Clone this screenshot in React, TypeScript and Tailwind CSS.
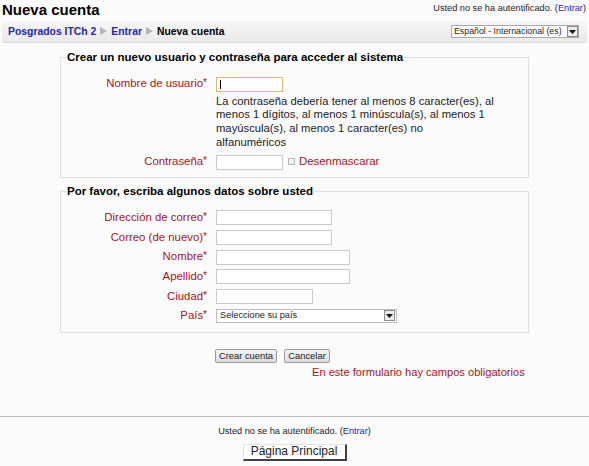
import React from "react";

const red = "text-[#a3161c]";

function Caret() {
  return <span className="block w-[1px] h-[9px] bg-black ml-[3px]" />;
}

function TextBox({ w, focused }: { w: string; focused?: boolean }) {
  return (
    <div
      className={`${w} h-[15px] bg-white border flex items-center ${
        focused ? "border-[#dcb878]" : "border-[#c9c9c9]"
      }`}
    >
      {focused && <Caret />}
    </div>
  );
}

function DropArrow() {
  return (
    <span className="w-[11px] h-[11px] border border-[#8d8d8d] bg-[#ececec] flex items-center justify-center shrink-0">
      <svg width="7" height="4" viewBox="0 0 7 4">
        <path d="M0 0H7L3.5 4Z" fill="#111" />
      </svg>
    </span>
  );
}

function Row({ label, children }: { label: string; children: React.ReactNode }) {
  return (
    <div className="grid grid-cols-[146px_1fr] gap-x-[9px] items-center h-[19.6px]">
      <div className={`text-right text-[11.4px] whitespace-nowrap ${red}`}>
        {label}
        <span className="text-[10px] align-top">*</span>
      </div>
      <div className="flex items-center">{children}</div>
    </div>
  );
}

function Arrow() {
  return (
    <svg width="7" height="8" viewBox="0 0 7 8" className="mx-[4px] inline-block">
      <path d="M0 0L7 4L0 8Z" fill="#b5b5b5" />
    </svg>
  );
}

export default function App() {
  return (
    <div className="w-[589px] h-[466px] bg-[#fbfbfb] font-['Liberation_Sans',Arial,sans-serif] text-[11.25px] text-[#222] overflow-hidden">
      <header className="flex justify-between items-start px-[2px]">
        <h1 className="text-[15px] font-bold leading-[20px] text-black">Nueva cuenta</h1>
        <div className="text-[9.2px] leading-[16px] pr-[1px] whitespace-nowrap">
          Usted no se ha autentificado. (<a className="text-[#2626a8]">Entrar</a>)
        </div>
      </header>

      <nav className="mx-[2px] mt-[1px] h-[22px] rounded-[3px] bg-gradient-to-b from-[#f6f6f6] to-[#e9e9e9] border-b border-[#dadada] flex items-center justify-between pl-[6px] pr-[8px]">
        <div className="font-bold text-[10.4px] flex items-center whitespace-nowrap">
          <a className="text-[#2626a8]">Posgrados ITCh 2</a>
          <Arrow />
          <a className="text-[#2626a8]">Entrar</a>
          <Arrow />
          <span className="text-black">Nueva cuenta</span>
        </div>
        <div className="h-[13px] w-[128px] bg-white border border-[#a9a9a9] flex items-center justify-between text-[8.8px] pl-[2px] whitespace-nowrap">
          <span>Español - Internacional (es)</span>
          <DropArrow />
        </div>
      </nav>

      <main className="mt-[6px] w-[469px] mx-auto">
        <fieldset className="border border-[#dedede] pb-[5px]">
          <legend className="ml-[5px] px-[1px] font-bold text-black text-[11.5px] whitespace-nowrap">
            Crear un nuevo usuario y contraseña para acceder al sistema
          </legend>
          <div className="pt-[8px]">
            <Row label="Nombre de usuario">
              <TextBox w="w-[67px]" focused />
            </Row>
            <p className="ml-[155px] leading-[13.6px] mt-[1px] whitespace-nowrap">
              La contraseña debería tener al menos 8 caracter(es), al
              <br />
              menos 1 dígitos, al menos 1 minúscula(s), al menos 1
              <br />
              mayúscula(s), al menos 1 caracter(es) no
              <br />
              alfanuméricos
            </p>
            <div className="mt-[3px]">
              <Row label="Contraseña">
                <TextBox w="w-[67px]" />
                <span className="ml-[5px] w-[7px] h-[7px] border border-[#b5b5b5] bg-[#f2f2f2] mr-[4px] -mt-[2px]" />
                <span className={`text-[11.4px] ${red}`}>Desenmascarar</span>
              </Row>
            </div>
          </div>
        </fieldset>

        <fieldset className="border border-[#dedede] mt-[5px] pb-[6px]">
          <legend className="ml-[5px] px-[1px] font-bold text-black text-[11.5px] whitespace-nowrap">
            Por favor, escriba algunos datos sobre usted
          </legend>
          <div className="pt-[8px]">
            <Row label="Dirección de correo">
              <TextBox w="w-[116px]" />
            </Row>
            <Row label="Correo (de nuevo)">
              <TextBox w="w-[116px]" />
            </Row>
            <Row label="Nombre">
              <TextBox w="w-[134px]" />
            </Row>
            <Row label="Apellido">
              <TextBox w="w-[134px]" />
            </Row>
            <Row label="Ciudad">
              <TextBox w="w-[97px]" />
            </Row>
            <Row label="País">
              <div className="w-[181px] h-[14px] bg-white border border-[#bdbdbd] flex items-center justify-between text-[9.2px] pl-[3px] pr-[1px]">
                <span>Seleccione su país</span>
                <DropArrow />
              </div>
            </Row>
          </div>
        </fieldset>

        <div className="mt-[16px] pl-[155px] flex gap-[7px] text-[9.4px]">
          <button className="w-[62px] h-[14px] leading-[12px] rounded-[2px] border border-[#9a9a9a] bg-gradient-to-b from-[#f4f4f4] to-[#dcdcdc]">
            Crear cuenta
          </button>
          <button className="w-[46px] h-[14px] leading-[12px] rounded-[2px] border border-[#9a9a9a] bg-gradient-to-b from-[#f4f4f4] to-[#dcdcdc]">
            Cancelar
          </button>
        </div>
        <p className={`pl-[252px] mt-[1px] leading-[16px] text-[11.1px] whitespace-nowrap ${red}`}>
          En este formulario hay campos obligatorios
        </p>
      </main>

      <hr className="mt-[36px] border-t border-[#b9b9b9]" />

      <footer className="flex flex-col items-center">
        <div className="text-[9.2px] leading-[14px] mt-[7px] whitespace-nowrap">
          Usted no se ha autentificado. (<a className="text-[#2626a8]">Entrar</a>)
        </div>
        <button className="mt-[6px] w-[104px] h-[17px] bg-white text-[12px] leading-[13px] border border-t-[#e3e3e3] border-l-[#e3e3e3] border-r-[2px] border-b-[2px] border-r-[#404040] border-b-[#404040]">
          Página Principal
        </button>
      </footer>
    </div>
  );
}
